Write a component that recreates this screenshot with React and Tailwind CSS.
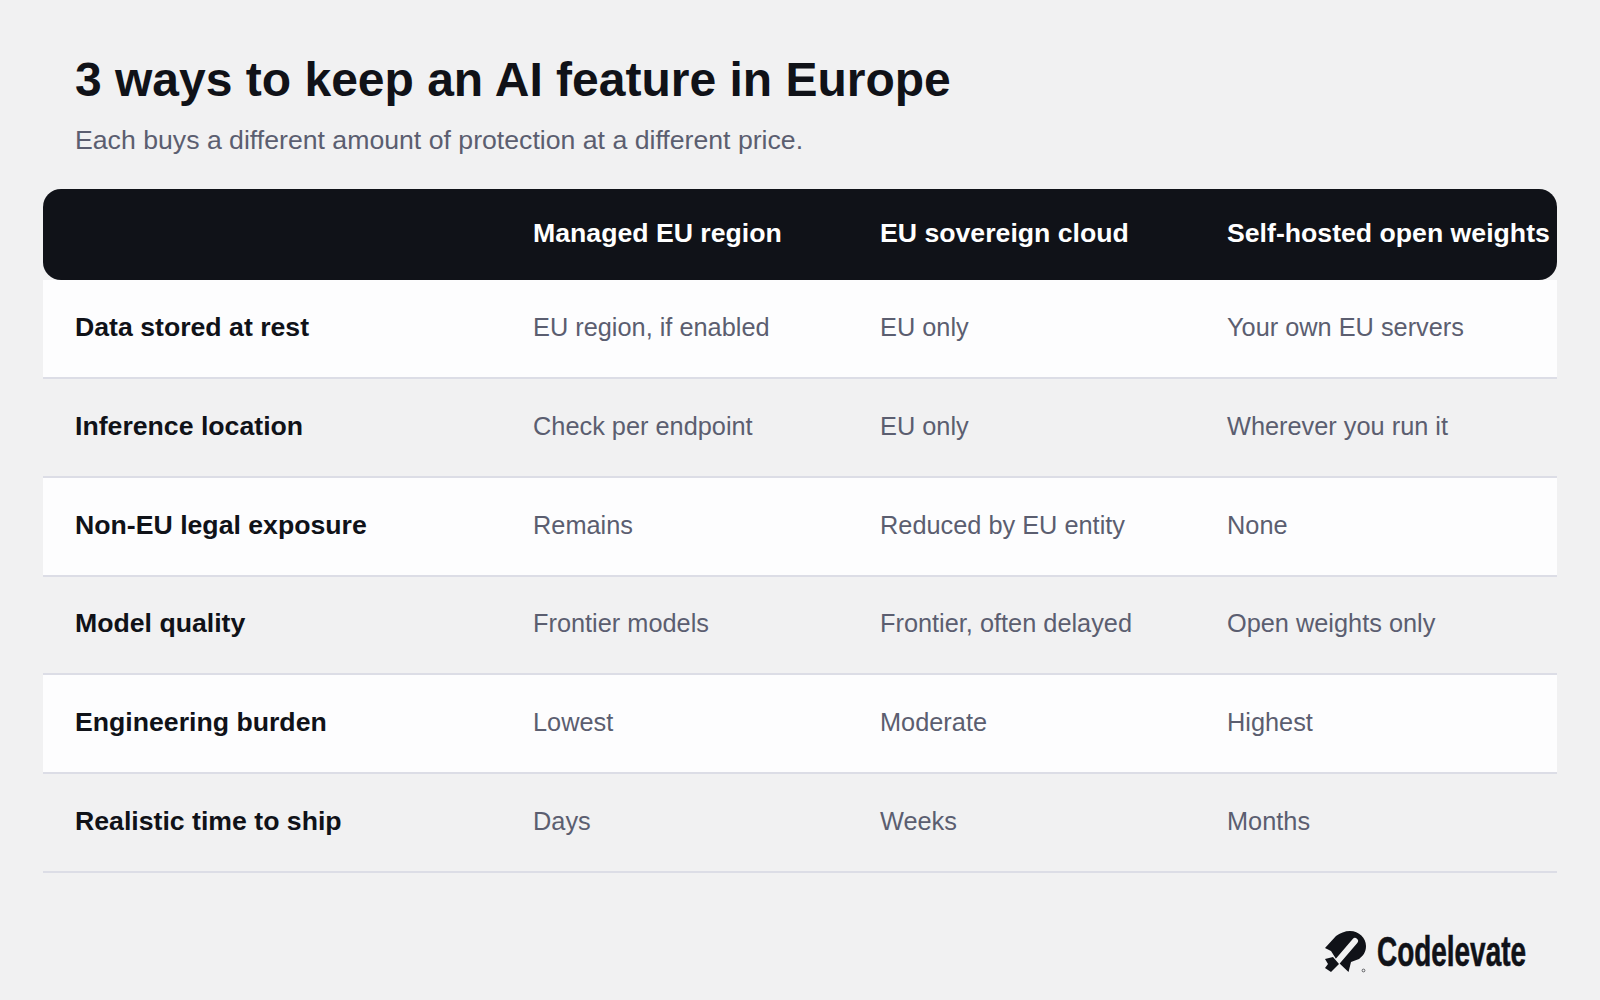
const rows = [
  ['Data stored at rest', 'EU region, if enabled', 'EU only', 'Your own EU servers'],
  ['Inference location', 'Check per endpoint', 'EU only', 'Wherever you run it'],
  ['Non-EU legal exposure', 'Remains', 'Reduced by EU entity', 'None'],
  ['Model quality', 'Frontier models', 'Frontier, often delayed', 'Open weights only'],
  ['Engineering burden', 'Lowest', 'Moderate', 'Highest'],
  ['Realistic time to ship', 'Days', 'Weeks', 'Months'],
];

function Logo() {
  return (
    <div className="flex items-center justify-end gap-[8px] pr-[32px]">
      <svg width="44" height="42" viewBox="0 0 44 42" className="text-[#101218]">
        <path
          fill="currentColor"
          d="M0 17 L11 5 C15 2 20 0 25 0 C34 0 41 7 41 15 C41 21 38 25 34 28 L26 31 L23.5 41 L13 31 L6 20 Z"
        />
        <path d="M30 10 L12 31" fill="none" stroke="#f1f1f2" strokeWidth="6" strokeLinecap="round" />
        <path fill="currentColor" d="M0 28 L8 26 L14 33 L6 41 L0 37 L3 33 Z" />
        <circle cx="38.5" cy="39.5" r="1.4" fill="none" stroke="currentColor" strokeWidth="0.6" />
      </svg>
      <div className="w-[148px]">
        <span className="block origin-left scale-x-[0.665] text-[42px] leading-none font-bold whitespace-nowrap text-[#101218] [-webkit-text-stroke:0.6px_#101218]">
          Codelevate
        </span>
      </div>
    </div>
  );
}

export default function App() {
  return (
    <div className="h-[1000px] w-[1600px] overflow-hidden bg-[#f1f1f2] px-[43px] font-['Liberation_Sans',sans-serif]">
      <div className="px-[32px] pt-[50px]">
        <h1 className="text-[48px] leading-[60px] font-bold text-[#101218]">3 ways to keep an AI feature in Europe</h1>
        <p className="mt-[13px] text-[26.67px] leading-[34px] text-[#5b5e70]">
          Each buys a different amount of protection at a different price.
        </p>
      </div>

      <div className="mt-[32px] w-[1514px]">
        <div className="grid h-[91px] grid-cols-[458px_347px_347px_362px] items-center rounded-[18px] bg-[#101218] pb-[3px] text-[26.67px] font-bold text-white">
          <div />
          <div className="pl-[32px]">Managed EU region</div>
          <div className="pl-[32px]">EU sovereign cloud</div>
          <div className="pl-[32px] whitespace-nowrap">Self-hosted open weights</div>
        </div>
        {rows.map((row, i) => (
          <div
            key={row[0]}
            className={`grid h-[98.85px] grid-cols-[458px_347px_347px_362px] items-center border-b-2 border-[#dcdde6] pb-[3px] text-[25.33px] text-[#5b5e70] ${
              i % 2 === 0 ? 'bg-[#fdfdfe]' : 'bg-[#f1f1f2]'
            }`}
          >
            <div className="pl-[32px] text-[26.67px] font-bold text-[#101218]">{row[0]}</div>
            <div className="pt-[2px] pl-[32px]">{row[1]}</div>
            <div className="pt-[2px] pl-[32px]">{row[2]}</div>
            <div className="pt-[2px] pl-[32px]">{row[3]}</div>
          </div>
        ))}
      </div>

      <div className="mt-[58px]">
        <Logo />
      </div>
    </div>
  );
}
